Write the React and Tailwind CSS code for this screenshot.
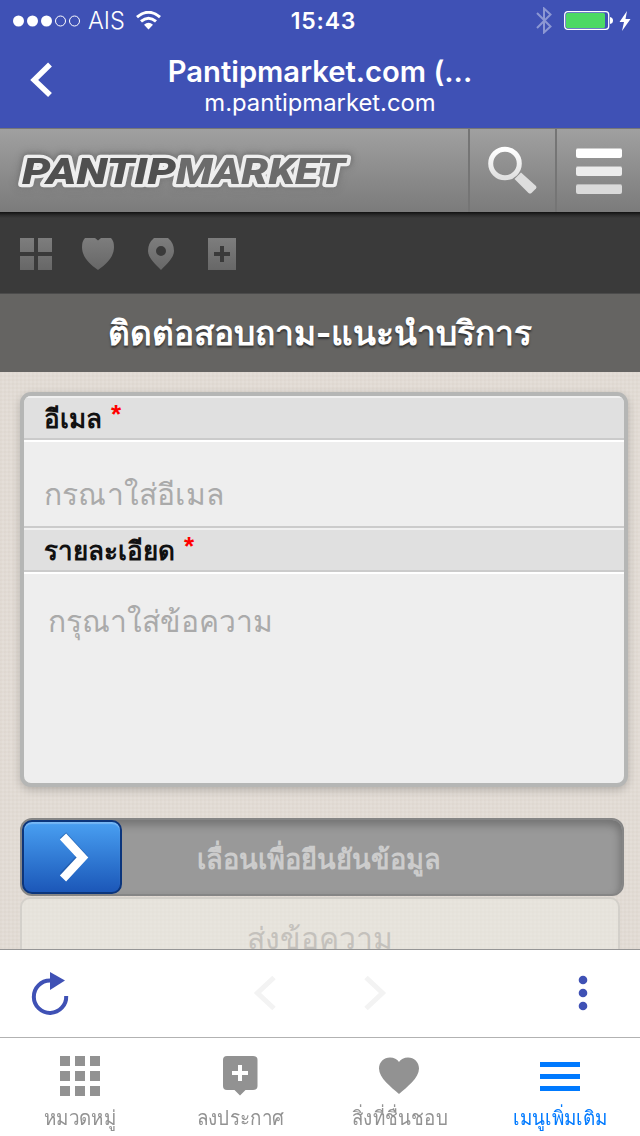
import { useState } from 'react';

const tabs = [
  { id: 'categories', label: 'หมวดหมู่' },
  { id: 'post', label: 'ลงประกาศ' },
  { id: 'favorites', label: 'สิ่งที่ชื่นชอบ' },
  { id: 'more', label: 'เมนูเพิ่มเติม' },
];

function StatusBar() {
  return (
    <div className="grid h-10 grid-cols-3 items-center pt-px">
      <div className="flex items-center pl-[13px]">
        <svg className="h-3 w-[68px]" viewBox="0 0 68 12">
          <circle cx="5.5" cy="6" r="5.5" fill="#fff" />
          <circle cx="19.5" cy="6" r="5.5" fill="#fff" />
          <circle cx="33.5" cy="6" r="5.5" fill="#fff" />
          <circle cx="47.5" cy="6" r="5" fill="none" stroke="#fff" />
          <circle cx="61.5" cy="6" r="5" fill="none" stroke="#fff" />
        </svg>
        <span className="ml-[7px] w-[38px] text-[23.5px] font-light">AIS</span>
        <svg className="ml-[10px] h-[19px] w-[25px]" viewBox="0 0 25 19" fill="none" stroke="#fff">
          <path d="M1 6.2 Q12.5 -3.6 24 6.2" strokeWidth="3" />
          <path d="M5 10.4 Q12.5 4 20 10.4" strokeWidth="3" />
          <path d="M12.5 18.5 L8 13.7 Q12.5 10 17 13.7 Z" fill="#fff" stroke="none" />
        </svg>
      </div>
      <div className="pt-0.5 pl-[7px] text-center text-[23px] font-semibold tracking-[0.8px]">15:43</div>
      <div className="flex items-center justify-end pr-[9px]">
        <svg className="h-[27px] w-4" viewBox="0 0 16 27" fill="none" stroke="#8c97d3" strokeWidth="2">
          <path d="M1 6 L14.5 19.5 L8 25.5 V1.5 L14.5 7.5 L1 21" />
        </svg>
        <svg className="ml-3 h-[19px] w-[50px]" viewBox="0 0 50 19">
          <rect x="0.7" y="0.7" width="44" height="17.6" rx="3" fill="none" stroke="#fff" strokeWidth="1.3" />
          <rect x="2" y="2" width="39" height="15" rx="1.5" fill="#4cd964" />
          <path d="M46 6 Q49 6.5 49 9.5 T46 13 Z" fill="#fff" />
        </svg>
        <svg className="ml-[5px] h-5 w-3" viewBox="0 0 12 20">
          <path d="M8 0 L0.5 11 H5 L3 20 L11.5 8 H6.5 Z" fill="#fff" />
        </svg>
      </div>
    </div>
  );
}

function NavBar() {
  return (
    <div className="grid h-[88px] grid-cols-[160px_320px_160px]">
      <button className="flex items-start pt-[22px] pl-[30px]">
        <svg className="h-[36px] w-[23px]" viewBox="0 0 23 36" fill="none" stroke="#fff" strokeWidth="5.5">
          <path d="M20 2.5 L4.2 18 L20 33" />
        </svg>
      </button>
      <div className="pt-[15px] text-center">
        <div className="text-[29.2px] leading-[34px] font-semibold whitespace-nowrap">Pantipmarket.com (...</div>
        <div className="text-[23.8px] leading-[28px] whitespace-nowrap">m.pantipmarket.com</div>
      </div>
    </div>
  );
}

function SiteHeader() {
  return (
    <header className="flex h-[84px] border-t border-[#777] bg-linear-to-b from-[#a0a0a0] to-[#7b7b7b]">
      <svg className="h-[83px] w-[468px] [filter:drop-shadow(0_0_2px_#7c7c7c)_drop-shadow(0_0_2px_#7c7c7c)_drop-shadow(0_0_2px_#7f7f7f)]" viewBox="0 129 468 83">
        <g
          fontFamily="Roboto, sans-serif"
          fontSize="37.5"
          fontWeight="900"
          fontStyle="italic"
          stroke="#eee"
          strokeWidth="6.5"
          strokeLinejoin="round"
          paintOrder="stroke"
        >
          <text x="176" y="184" textLength="169" lengthAdjust="spacingAndGlyphs" fill="#6b6b6b">MARKET</text>
          <text x="22" y="184" textLength="154" lengthAdjust="spacingAndGlyphs" fill="#505050">PANTIP</text>
        </g>
      </svg>
      <button className="flex w-[87px] justify-center border-l-2 border-[#757575] pt-4">
        <svg className="h-[50px] w-[50px]" viewBox="0 0 50 50">
          <defs>
            <linearGradient id="lens" x1="0" y1="0" x2="0" y2="1">
              <stop offset="0" stopColor="#fff" />
              <stop offset="1" stopColor="#e0e0e0" />
            </linearGradient>
          </defs>
          <circle cx="17" cy="18.5" r="14.3" fill="none" stroke="url(#lens)" strokeWidth="5" />
          <path d="M26.5 34 L33 27.5 L48 41 Q49 42 48 43.5 L43.5 48 Q42 49 40.5 48 Z" fill="#ddd" />
        </svg>
      </button>
      <button className="flex flex-1 flex-col gap-2 border-l-2 border-[#757575] pt-[19px] pl-[19px]">
        <span className="h-[10px] w-[46px] rounded-xs border-t border-[#ccc] bg-white" />
        <span className="h-[10px] w-[46px] rounded-xs border-t border-[#bbb] bg-[#ececec]" />
        <span className="h-[10px] w-[46px] rounded-xs border-t border-[#bbb] bg-[#dadada]" />
      </button>
    </header>
  );
}

function IconMenu() {
  return (
    <nav className="h-[82px] border-b border-[#4b4b4b] bg-[linear-gradient(#111,#2b2b2b_3px,#3a3a3a_6px)] pt-[26px] pl-5">
      <svg className="h-8 w-[218px]" viewBox="0 0 218 32">
        <defs>
          <linearGradient id="menuGray" gradientUnits="userSpaceOnUse" x1="0" y1="0" x2="0" y2="32">
            <stop offset="0" stopColor="#7d7d7d" />
            <stop offset="1" stopColor="#676767" />
          </linearGradient>
        </defs>
        <g fill="url(#menuGray)">
          <path d="M0 0H14V14H0Z M18 0H32V14H18Z M0 18H14V32H0Z M18 18H32V32H18Z" />
          <path d="M65 0H75L78 2.5L81 0H91Q94 3 94 9C94 18 88 25 78 32C68 25 62 18 62 9Q62 3 65 0Z" />
          <path fillRule="evenodd" d="M134 0H148Q154 5 154 13C154 19 148 25 141 32C134 25 128 19 128 13Q128 5 134 0Z M141 8A5 5 0 1 0 141 18A5 5 0 1 0 141 8Z" />
          <path fillRule="evenodd" d="M188 0H216V32H188Z M200 8V14H194V18H200V24H204V18H210V14H204V8Z" />
        </g>
      </svg>
    </nav>
  );
}

function FieldLabel({ children }) {
  return (
    <div className="h-[46px] border-b-2 border-white">
      <div className="flex h-11 gap-[9px] border-t-2 border-b-2 border-t-[#f0f0f0] border-b-[#cbcbcb] bg-[#e0e0e0] pl-5 text-[26px] leading-[41px] font-bold text-[#111]">
        <span>{children}</span>
        <span className="font-['Liberation_Sans',sans-serif] leading-[33px] text-[#f00]">*</span>
      </div>
    </div>
  );
}

function ContactForm() {
  return (
    <main className="h-[577px] overflow-hidden bg-[#e4ded8] bg-[repeating-linear-gradient(0deg,rgba(150,130,105,0.035)_0_2px,transparent_2px_4px),repeating-linear-gradient(90deg,rgba(150,130,105,0.035)_0_2px,transparent_2px_4px)] pt-5 pl-5">
      <div className="h-[395px] w-[608px] overflow-hidden rounded-[11px] border-4 border-[#b5b6b5] bg-[#eee] shadow-[0_3px_8px_rgba(0,0,0,0.2)]">
        <FieldLabel>อีเมล</FieldLabel>
        <div className="h-[86px] border-b-2 border-[#cbcbcb] pt-[30px] pl-5 text-[30px] leading-[44px] tracking-[0.2px] whitespace-nowrap text-[#aaa]">
          กรณาใส่อีเมล
        </div>
        <FieldLabel>รายละเอียด</FieldLabel>
        <div className="pt-[25px] pl-6 text-[30px] leading-[44px] whitespace-nowrap text-[#aaa]">กรุณาใส่ข้อความ</div>
      </div>

      <div className="mt-[31px] flex h-[78px] w-[604px] items-center rounded-xl border-2 border-[#858585] bg-[#999] shadow-[inset_-2px_5px_8px_rgba(0,0,0,0.25)]">
        <button className="flex h-[74px] w-[100px] items-center justify-center rounded-[10px] border-2 border-[#0b357c] bg-linear-to-b from-[#4aa0f2] to-[#1c57b8] pl-1 shadow-[inset_0_2px_1px_rgba(255,255,255,0.25)]">
          <svg className="h-[50px] w-8" viewBox="0 0 32 50" fill="none" strokeWidth="8.5">
            <path d="M5 3 L24 24 L5 44" stroke="#123d7b" opacity=".35" />
            <path d="M5 4.5 L24.5 25.5 L5 46.5" stroke="#fff" />
          </svg>
        </button>
        <span className="ml-[75px] pt-1.5 text-[27.2px] font-bold whitespace-nowrap text-[#ccc]">เลื่อนเพื่อยืนยันข้อมูล</span>
      </div>

      <button className="mt-px block h-[90px] w-[600px] rounded-[10px] border-2 border-[#d3d0ca] bg-[#ebebe4]/50 pb-2 text-[30px] text-[#c4c1bc]">
        ส่งข้อความ
      </button>
    </main>
  );
}

function Toolbar() {
  return (
    <div className="flex h-[89px] items-center border-t border-b border-t-[#959595] border-b-[#b2b2b2] bg-white">
      <svg className="h-[87px] w-full" viewBox="0 950 640 87">
        <path d="M50 980.5 A16.2 16.2 0 1 0 66.2 996" fill="none" stroke="#3f51b5" strokeWidth="4" />
        <path d="M50 972 L65 980.5 L50 990 Z" fill="#3f51b5" />
        <path d="M274 977.5 L257.5 993 L274 1008.5 M366 977.5 L382.5 993 L366 1008.5" fill="none" stroke="#f3f3f3" strokeWidth="5" />
        <circle cx="583" cy="980" r="4.3" fill="#3f51b5" />
        <circle cx="583" cy="993" r="4.3" fill="#3f51b5" />
        <circle cx="583" cy="1006" r="4.3" fill="#3f51b5" />
      </svg>
    </div>
  );
}

function TabIcon({ id }) {
  return (
    <svg className="h-[42px] w-[42px]" viewBox="0 0 42 42" fill="currentColor">
      {id === 'categories' && (
        <path d="M1 1h10v10H1z M16 1h10v10H16z M31 1h10v10H31z M1 16h10v10H1z M16 16h10v10H16z M31 16h10v10H31z M1 31h10v10H1z M16 31h10v10H16z M31 31h10v10H31z" />
      )}
      {id === 'post' && (
        <path fillRule="evenodd" d="M8 1H34Q38.5 1 38.5 5V31Q38.5 35 34 35H26.5L21 40.5L15.5 35H8Q4 35 4 31V5Q4 1 8 1Z M19 10V16H13V20H19V26H23V20H29V16H23V10Z" />
      )}
      {id === 'favorites' && (
        <path d="M20 39 C12 32 0 23 0 13.5 C0 7 5 2.5 11 2.5 C15 2.5 18 4 20 7 C22 4 25 2.5 29 2.5 C35 2.5 40 7 40 13.5 C40 23 28 32 20 39Z" />
      )}
      {id === 'more' && <path d="M1 7h40v5H1z M1 19h40v5H1z M1 31h40v5H1z" />}
    </svg>
  );
}

export default function App() {
  const [active, setActive] = useState('more');

  return (
    <div className="h-[1136px] w-[640px] overflow-hidden bg-white font-['Inter',sans-serif]">
      <div className="bg-[#3f51b5] text-white">
        <StatusBar />
        <NavBar />
      </div>
      <SiteHeader />
      <IconMenu />
      <h1 className="h-[78px] bg-[#656462] text-center text-[33.5px] leading-[78px] font-bold whitespace-nowrap text-white [text-shadow:0_2px_2px_#333]">
        ติดต่อสอบถาม-แนะนำบริการ
      </h1>
      <ContactForm />
      <Toolbar />

      {/* Bottom tabs */}
      <div className="grid h-[98px] grid-cols-4">
        {tabs.map((tab) => (
          <button
            key={tab.id}
            onClick={() => setActive(tab.id)}
            className={`flex flex-col items-center pt-[17px] ${active === tab.id ? 'text-[#007aff]' : 'text-[#929292]'}`}
          >
            <TabIcon id={tab.id} />
            <span className="mt-1 scale-x-[0.94] text-[20px] leading-[34px] whitespace-nowrap">{tab.label}</span>
          </button>
        ))}
      </div>
    </div>
  );
}
